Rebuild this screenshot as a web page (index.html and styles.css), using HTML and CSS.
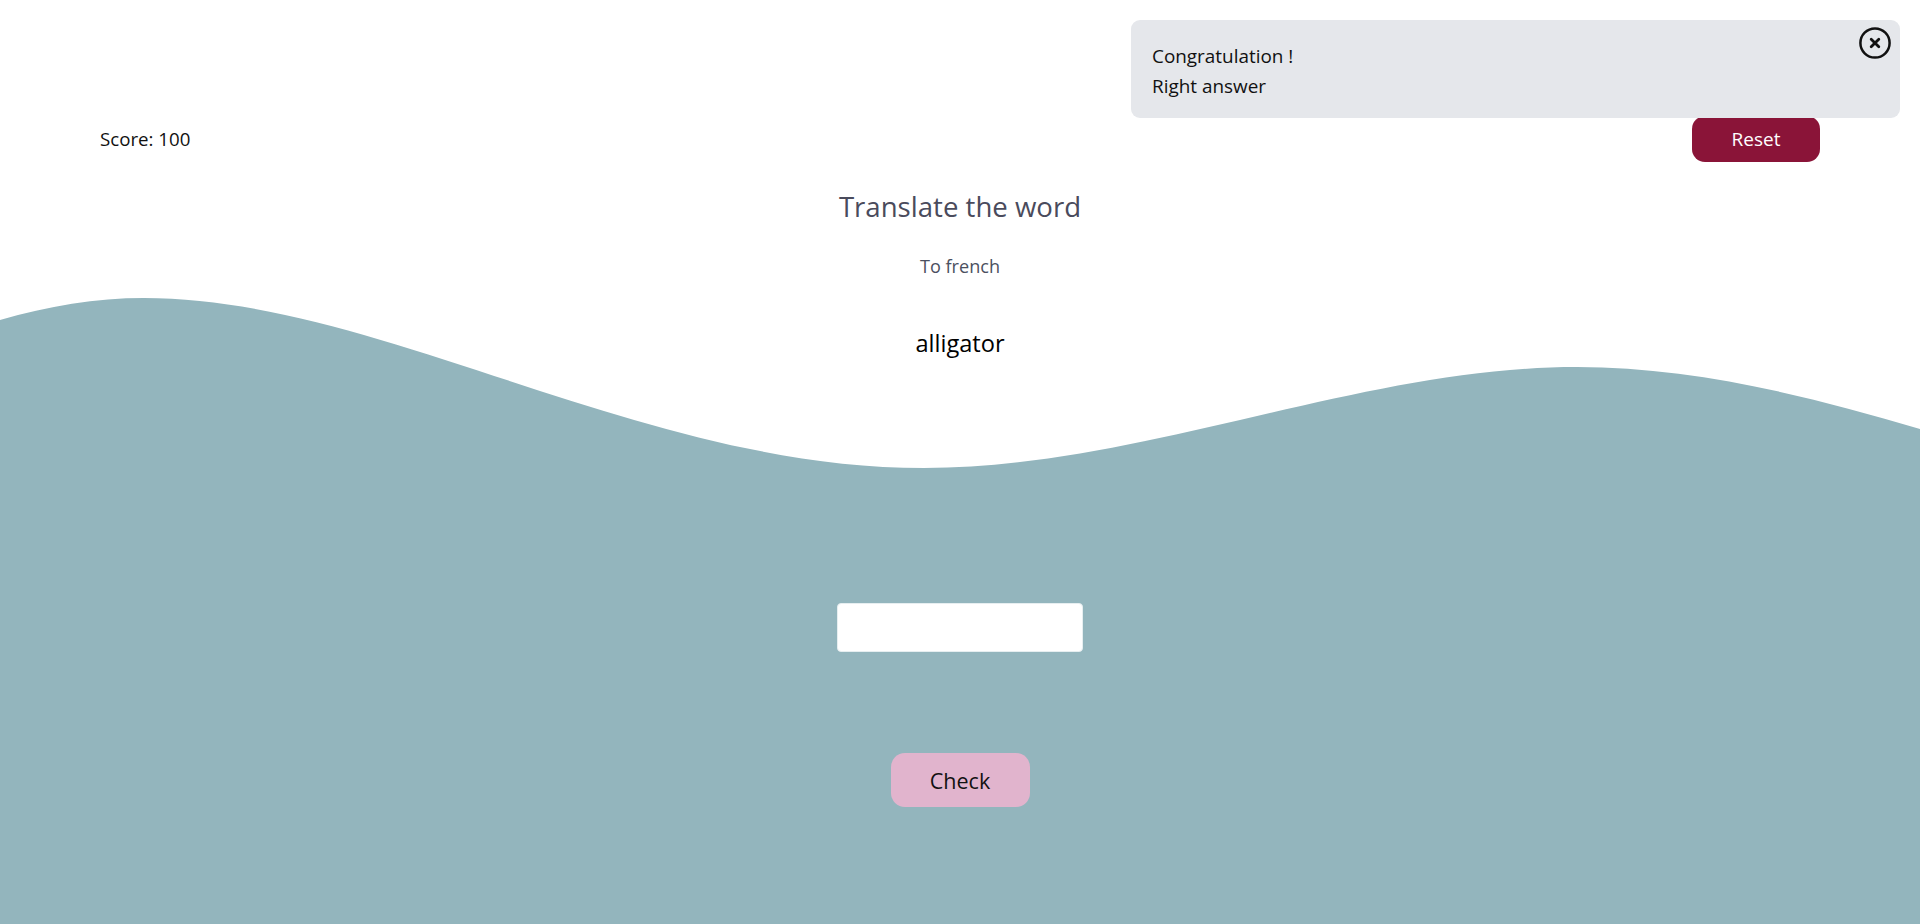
FILE: index.html
```html
<!DOCTYPE html>
<html lang="en">
<head>
<meta charset="utf-8">
<title>Translate the word</title>
<link rel="stylesheet" href="styles.css">
</head>
<body>
<div class="page">
  <svg class="wave" viewBox="0 0 1920 924" preserveAspectRatio="none" aria-hidden="true">
    <path d="M0,320 C48,306 96,298 144,298 C380,298 640,468 924,468 C1142,468 1359,367 1577,367 C1691,367 1806,395 1920,429 L1920,924 L0,924 Z" fill="#93b5bd"/>
  </svg>

  <div class="content">
    <header class="topbar">
      <span class="score">Score: 100</span>
      <button class="reset">Reset</button>
    </header>

    <main class="quiz">
      <h1 class="title">Translate the word</h1>
      <p class="subtitle">To french</p>
      <p class="word">alligator</p>
      <input class="answer" type="text" aria-label="answer">
      <button class="check">Check</button>
    </main>
  </div>

  <div class="toast">
    <p class="toast-line">Congratulation !</p>
    <p class="toast-line">Right answer</p>
    <button class="toast-close" aria-label="close">
      <svg viewBox="0 0 32 32" width="32" height="32">
        <circle cx="16" cy="16" r="14.6" fill="none" stroke="#111" stroke-width="2.5"/>
        <path d="M12.2 12.2 L19.8 19.8 M19.8 12.2 L12.2 19.8" stroke="#111" stroke-width="2.8" stroke-linecap="round"/>
      </svg>
    </button>
  </div>
</div>
</body>
</html>
```

FILE: styles.css
```css
* {
  box-sizing: border-box;
}

html, body {
  margin: 0;
  padding: 0;
}

body {
  font-family: "Open Sans", "Noto Sans", sans-serif;
  color: #111;
  background: #fff;
}

.page {
  position: relative;
  height: 100vh;
  overflow: hidden;
}

.wave {
  position: absolute;
  left: 0;
  top: 0;
  width: 100%;
  height: 100%;
  z-index: 0;
  display: block;
}

.content {
  position: relative;
  z-index: 1;
}

.topbar {
  display: flex;
  justify-content: space-between;
  align-items: center;
  height: 46px;
  margin-top: 116px;
  padding: 0 100px;
}

.score {
  font-size: 18.7px;
  line-height: 28px;
  color: #111;
}

.reset {
  width: 128px;
  height: 46px;
  border: none;
  border-radius: 13px;
  background: #8a1438;
  color: #fff;
  font-family: inherit;
  font-size: 19px;
  padding: 0;
}

.quiz {
  display: flex;
  flex-direction: column;
  align-items: center;
}

.title {
  margin: 24px 0 0;
  font-size: 27.6px;
  line-height: 40px;
  font-weight: 400;
  color: #4a4b5c;
}

.subtitle {
  margin: 26px 0 0;
  font-size: 18.1px;
  line-height: 28px;
  color: #4b5060;
}

.word {
  margin: 47px 0 0;
  font-size: 23.6px;
  line-height: 32px;
  color: #000;
}

.answer {
  margin-top: 244px;
  width: 246px;
  height: 49px;
  border: 1px solid #e6eef0;
  border-radius: 4px;
  background: #fff;
  outline: none;
}

.check {
  margin-top: 101px;
  width: 139px;
  height: 54px;
  border: none;
  border-radius: 14px;
  background: #e1b4cd;
  color: #111;
  font-family: inherit;
  font-size: 21.5px;
  padding: 0;
}

.toast {
  position: absolute;
  top: 20px;
  right: 20px;
  width: 769px;
  height: 98px;
  padding: 21px 21px 17px;
  background: #e5e7eb;
  border-radius: 9px;
  z-index: 2;
}

.toast-line {
  margin: 0;
  font-size: 18.9px;
  line-height: 30px;
  color: #111;
}

.toast-close {
  position: absolute;
  top: 7px;
  right: 9px;
  width: 32px;
  height: 32px;
  padding: 0;
  border: none;
  background: transparent;
  display: flex;
}
```
